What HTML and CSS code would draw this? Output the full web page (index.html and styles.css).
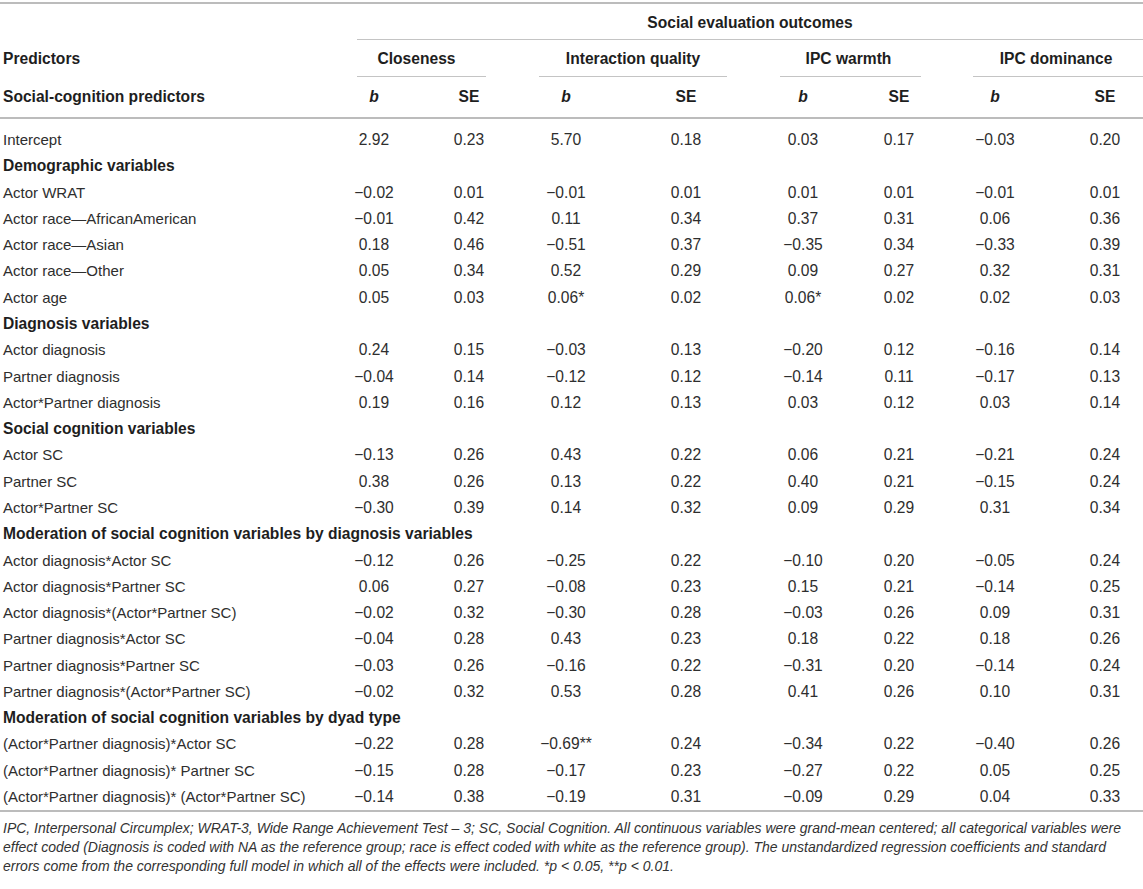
FILE: index.html
```html
<!DOCTYPE html>
<html lang="en">
<head>
<meta charset="utf-8">
<title>Social evaluation outcomes</title>
<link rel="stylesheet" href="styles.css">
</head>
<body>
<div class="table">
  <div class="head">
    <div class="hgrid hrow-top">
      <div class="outcomes">Social evaluation outcomes</div>
    </div>
    <div class="hgrid hrow-groups">
      <div class="pred">Predictors</div>
      <div class="grp g1">Closeness</div>
      <div class="grp g2">Interaction quality</div>
      <div class="grp g3">IPC warmth</div>
      <div class="grp g4">IPC dominance</div>
    </div>
    <div class="row hrow-sub">
      <div class="label">Social-cognition predictors</div>
      <div class="c1"><i>b</i></div><div class="c2">SE</div>
      <div class="c3"><i>b</i></div><div class="c4">SE</div>
      <div class="c5"><i>b</i></div><div class="c6">SE</div>
      <div class="c7"><i>b</i></div><div class="c8">SE</div>
    </div>
  </div>
  <div class="body">
    <div class="row"><div class="label">Intercept</div><div class="c1">2.92</div><div class="c2">0.23</div><div class="c3">5.70</div><div class="c4">0.18</div><div class="c5">0.03</div><div class="c6">0.17</div><div class="c7">−0.03</div><div class="c8">0.20</div></div>
    <div class="row section"><div class="label">Demographic variables</div></div>
    <div class="row"><div class="label">Actor WRAT</div><div class="c1">−0.02</div><div class="c2">0.01</div><div class="c3">−0.01</div><div class="c4">0.01</div><div class="c5">0.01</div><div class="c6">0.01</div><div class="c7">−0.01</div><div class="c8">0.01</div></div>
    <div class="row"><div class="label">Actor race—AfricanAmerican</div><div class="c1">−0.01</div><div class="c2">0.42</div><div class="c3">0.11</div><div class="c4">0.34</div><div class="c5">0.37</div><div class="c6">0.31</div><div class="c7">0.06</div><div class="c8">0.36</div></div>
    <div class="row"><div class="label">Actor race—Asian</div><div class="c1">0.18</div><div class="c2">0.46</div><div class="c3">−0.51</div><div class="c4">0.37</div><div class="c5">−0.35</div><div class="c6">0.34</div><div class="c7">−0.33</div><div class="c8">0.39</div></div>
    <div class="row"><div class="label">Actor race—Other</div><div class="c1">0.05</div><div class="c2">0.34</div><div class="c3">0.52</div><div class="c4">0.29</div><div class="c5">0.09</div><div class="c6">0.27</div><div class="c7">0.32</div><div class="c8">0.31</div></div>
    <div class="row"><div class="label">Actor age</div><div class="c1">0.05</div><div class="c2">0.03</div><div class="c3">0.06*</div><div class="c4">0.02</div><div class="c5">0.06*</div><div class="c6">0.02</div><div class="c7">0.02</div><div class="c8">0.03</div></div>
    <div class="row section"><div class="label">Diagnosis variables</div></div>
    <div class="row"><div class="label">Actor diagnosis</div><div class="c1">0.24</div><div class="c2">0.15</div><div class="c3">−0.03</div><div class="c4">0.13</div><div class="c5">−0.20</div><div class="c6">0.12</div><div class="c7">−0.16</div><div class="c8">0.14</div></div>
    <div class="row"><div class="label">Partner diagnosis</div><div class="c1">−0.04</div><div class="c2">0.14</div><div class="c3">−0.12</div><div class="c4">0.12</div><div class="c5">−0.14</div><div class="c6">0.11</div><div class="c7">−0.17</div><div class="c8">0.13</div></div>
    <div class="row"><div class="label">Actor*Partner diagnosis</div><div class="c1">0.19</div><div class="c2">0.16</div><div class="c3">0.12</div><div class="c4">0.13</div><div class="c5">0.03</div><div class="c6">0.12</div><div class="c7">0.03</div><div class="c8">0.14</div></div>
    <div class="row section"><div class="label">Social cognition variables</div></div>
    <div class="row"><div class="label">Actor SC</div><div class="c1">−0.13</div><div class="c2">0.26</div><div class="c3">0.43</div><div class="c4">0.22</div><div class="c5">0.06</div><div class="c6">0.21</div><div class="c7">−0.21</div><div class="c8">0.24</div></div>
    <div class="row"><div class="label">Partner SC</div><div class="c1">0.38</div><div class="c2">0.26</div><div class="c3">0.13</div><div class="c4">0.22</div><div class="c5">0.40</div><div class="c6">0.21</div><div class="c7">−0.15</div><div class="c8">0.24</div></div>
    <div class="row"><div class="label">Actor*Partner SC</div><div class="c1">−0.30</div><div class="c2">0.39</div><div class="c3">0.14</div><div class="c4">0.32</div><div class="c5">0.09</div><div class="c6">0.29</div><div class="c7">0.31</div><div class="c8">0.34</div></div>
    <div class="row section"><div class="label">Moderation of social cognition variables by diagnosis variables</div></div>
    <div class="row"><div class="label">Actor diagnosis*Actor SC</div><div class="c1">−0.12</div><div class="c2">0.26</div><div class="c3">−0.25</div><div class="c4">0.22</div><div class="c5">−0.10</div><div class="c6">0.20</div><div class="c7">−0.05</div><div class="c8">0.24</div></div>
    <div class="row"><div class="label">Actor diagnosis*Partner SC</div><div class="c1">0.06</div><div class="c2">0.27</div><div class="c3">−0.08</div><div class="c4">0.23</div><div class="c5">0.15</div><div class="c6">0.21</div><div class="c7">−0.14</div><div class="c8">0.25</div></div>
    <div class="row"><div class="label">Actor diagnosis*(Actor*Partner SC)</div><div class="c1">−0.02</div><div class="c2">0.32</div><div class="c3">−0.30</div><div class="c4">0.28</div><div class="c5">−0.03</div><div class="c6">0.26</div><div class="c7">0.09</div><div class="c8">0.31</div></div>
    <div class="row"><div class="label">Partner diagnosis*Actor SC</div><div class="c1">−0.04</div><div class="c2">0.28</div><div class="c3">0.43</div><div class="c4">0.23</div><div class="c5">0.18</div><div class="c6">0.22</div><div class="c7">0.18</div><div class="c8">0.26</div></div>
    <div class="row"><div class="label">Partner diagnosis*Partner SC</div><div class="c1">−0.03</div><div class="c2">0.26</div><div class="c3">−0.16</div><div class="c4">0.22</div><div class="c5">−0.31</div><div class="c6">0.20</div><div class="c7">−0.14</div><div class="c8">0.24</div></div>
    <div class="row"><div class="label">Partner diagnosis*(Actor*Partner SC)</div><div class="c1">−0.02</div><div class="c2">0.32</div><div class="c3">0.53</div><div class="c4">0.28</div><div class="c5">0.41</div><div class="c6">0.26</div><div class="c7">0.10</div><div class="c8">0.31</div></div>
    <div class="row section"><div class="label">Moderation of social cognition variables by dyad type</div></div>
    <div class="row"><div class="label">(Actor*Partner diagnosis)*Actor SC</div><div class="c1">−0.22</div><div class="c2">0.28</div><div class="c3">−0.69**</div><div class="c4">0.24</div><div class="c5">−0.34</div><div class="c6">0.22</div><div class="c7">−0.40</div><div class="c8">0.26</div></div>
    <div class="row"><div class="label">(Actor*Partner diagnosis)* Partner SC</div><div class="c1">−0.15</div><div class="c2">0.28</div><div class="c3">−0.17</div><div class="c4">0.23</div><div class="c5">−0.27</div><div class="c6">0.22</div><div class="c7">0.05</div><div class="c8">0.25</div></div>
    <div class="row"><div class="label">(Actor*Partner diagnosis)* (Actor*Partner SC)</div><div class="c1">−0.14</div><div class="c2">0.38</div><div class="c3">−0.19</div><div class="c4">0.31</div><div class="c5">−0.09</div><div class="c6">0.29</div><div class="c7">0.04</div><div class="c8">0.33</div></div>
  </div>
</div>
<p class="note">IPC, Interpersonal Circumplex; WRAT-3, Wide Range Achievement Test – 3; SC, Social Cognition. All continuous variables were grand-mean centered; all categorical variables were<br>effect coded (Diagnosis is coded with NA as the reference group; race is effect coded with white as the reference group). The unstandardized regression coefficients and standard<br>errors come from the corresponding full model in which all of the effects were included. *<span>p</span> &lt; 0.05, **<span>p</span> &lt; 0.01.</p>
</body>
</html>
```

FILE: styles.css
```css
html, body {
  margin: 0;
  padding: 0;
  background: #ffffff;
}

body {
  font-family: "Liberation Sans", Arial, Helvetica, sans-serif;
  font-size: 15px;
  color: #2e2e2e;
  padding-top: 2px;
}

.table {
  border-top: 2px solid #bcbcbc;
  border-bottom: 2px solid #bcbcbc;
}

.hgrid {
  display: grid;
  grid-template-columns: 357px 129px 53px 188px 53px 141px 52px 170px;
  font-weight: bold;
  font-size: 15.6px;
  color: #1e1e1e;
  line-height: 18px;
}

.hrow-top .outcomes {
  grid-column: 2 / -1;
  text-align: center;
  padding: 10px 0 7px;
  border-bottom: 1px solid #c4c4c4;
}

.hrow-groups > div {
  padding: 10px 0 8px;
}

.hrow-groups .pred {
  padding-left: 3px;
}

.hrow-groups .grp {
  text-align: center;
  border-bottom: 1px solid #c4c4c4;
}

.hrow-groups .g1 { grid-column: 2; padding-right: 10px; }
.hrow-groups .g2 { grid-column: 4; }
.hrow-groups .g3 { grid-column: 6; padding-right: 4px; }
.hrow-groups .g4 { grid-column: 8; padding-right: 4px; }

.row {
  display: grid;
  grid-template-columns: 334px 80px 15px 80px 17px 80px 40px 80px 37px 80px 16px 80px 16px 80px 32px 76px;
  line-height: 18.28px;
  padding: 4px 0;
  font-size: 15.6px;
}

.row > div {
  text-align: center;
  white-space: nowrap;
}

.row .label {
  grid-column: 1;
  text-align: left;
  padding-left: 3px;
  font-size: 15px;
}

.row .c1 { grid-column: 2; }
.row .c2 { grid-column: 4; }
.row .c3 { grid-column: 6; }
.row .c4 { grid-column: 8; }
.row .c5 { grid-column: 10; }
.row .c6 { grid-column: 12; }
.row .c7 { grid-column: 14; }
.row .c8 { grid-column: 16; }

.row.section .label {
  grid-column: 1 / -1;
  font-weight: bold;
  font-size: 15.6px;
  color: #1e1e1e;
}

.hrow-sub {
  font-weight: bold;
  color: #1e1e1e;
  line-height: 18px;
  padding: 11px 0;
  border-bottom: 2px solid #bcbcbc;
}

.hrow-sub .label {
  font-size: 15.6px;
}

.body {
  padding-top: 8px;
}

.note {
  margin: 7px 0 0;
  padding-left: 3px;
  font-style: italic;
  font-size: 14px;
  line-height: 19px;
  color: #333333;
  white-space: nowrap;
}
```
